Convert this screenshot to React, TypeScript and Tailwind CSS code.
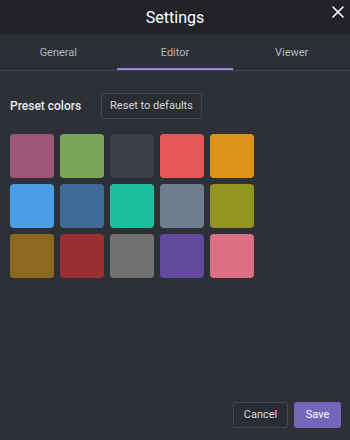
import React from "react";

const colors = [
  "#9d5679", "#7aa65a", "#3c3f48", "#e55858", "#dc9317",
  "#4a9de6", "#3f6b96", "#1dbf9d", "#717d8c", "#939421",
  "#8c6820", "#992f30", "#717171", "#62499d", "#db7083",
];

export default function App() {
  return (
    <div className="w-[350px] h-[440px] flex flex-col bg-[#2e3038] text-white" style={{ fontFamily: "Roboto, 'Noto Sans', sans-serif" }}>
      <div className="h-[35px] bg-[#222327] flex items-center justify-center relative shrink-0">
        <span className="text-[16px] text-white">Settings</span>
        <button className="absolute right-[4px] top-[4px] w-[16px] h-[16px] flex items-center justify-center">
          <svg width="12" height="12" viewBox="0 0 12 12" stroke="white" strokeWidth="1.6" strokeLinecap="round">
            <path d="M1 1L11 11M11 1L1 11" />
          </svg>
        </button>
      </div>
      <div className="h-[36px] bg-[#2c2e36] flex border-b border-[#43454d] shrink-0">
        <div className="flex-1 flex items-center justify-center pt-[2px] text-[11px] text-[#b5b6ba]">General</div>
        <div className="flex-1 flex items-center justify-center pt-[2px] text-[11px] text-[#b5b6ba] relative">
          Editor
          <div className="absolute left-0 right-0 bottom-0 h-[2px] bg-[#9b86d6]" />
        </div>
        <div className="flex-1 flex items-center justify-center pt-[2px] text-[11px] text-[#b5b6ba]">Viewer</div>
      </div>
      <div className="flex-1 flex flex-col px-[10px]">
        <div className="flex items-center mt-[22px]">
          <span className="text-[12px] font-medium text-[#e9e9eb] w-[91px]">Preset colors</span>
          <button className="h-[26px] w-[101px] border border-[#45474f] rounded-[3px] text-[11px] text-[#d8d8da] bg-[#2b2d34]">Reset to defaults</button>
        </div>
        <div className="grid grid-cols-[repeat(5,44px)] gap-[6px] mt-[15px]">
          {colors.map((c, i) => (
            <div key={i} className="w-[44px] h-[44px] rounded-[4px]" style={{ backgroundColor: c }} />
          ))}
        </div>
        <div className="flex-1" />
        <div className="flex justify-end gap-[6px] mb-[12px] mr-[-1px]">
          <button className="h-[26px] w-[55px] border border-[#45474f] rounded-[3px] text-[11px] text-[#d8d8da] bg-[#2b2d34]">Cancel</button>
          <button className="h-[26px] w-[47px] rounded-[3px] text-[11px] text-white bg-[#7566bb]">Save</button>
        </div>
      </div>
    </div>
  );
}
